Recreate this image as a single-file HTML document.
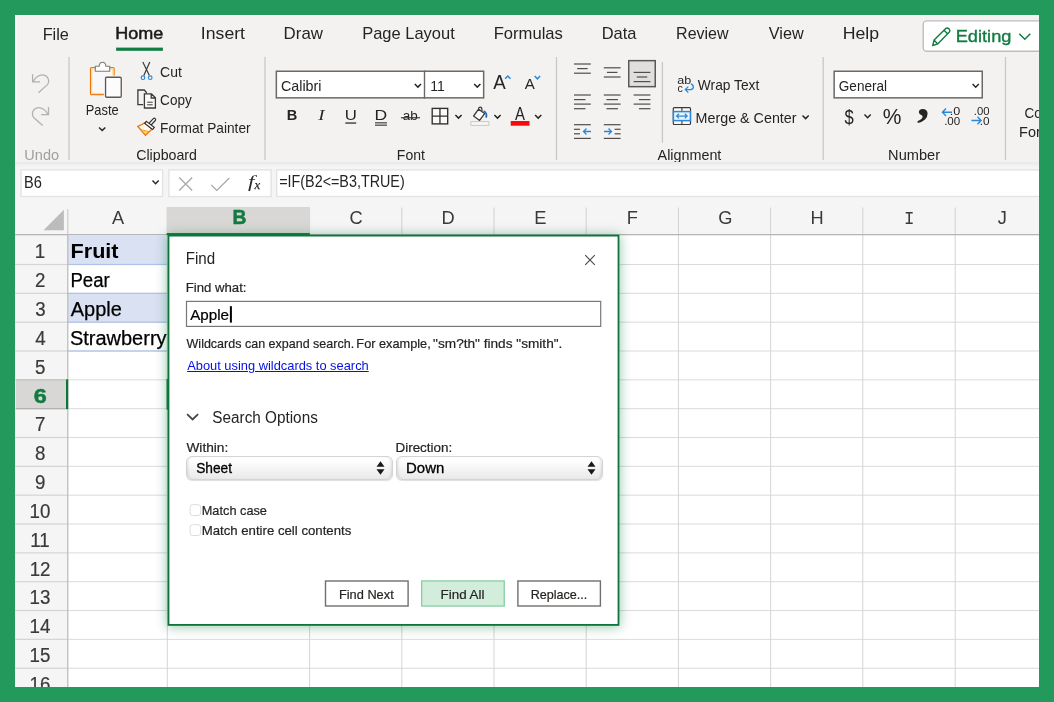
<!DOCTYPE html>
<html lang="en">
<head>
<meta charset="utf-8">
<title>Excel - Find</title>
<style>
html,body{margin:0;padding:0;}
body{width:1054px;height:702px;overflow:hidden;background:#239a5c;font-family:"Liberation Sans",sans-serif;color:#252423;}
.app{position:absolute;left:15px;top:15px;width:1024px;height:672px;overflow:hidden;background:#f3f2f1;}
.cv{will-change:transform;position:absolute;left:-15px;top:-15px;width:1054px;height:702px;}
.t{position:absolute;white-space:pre;line-height:1;transform-origin:0 0;}
.b{position:absolute;box-sizing:border-box;}
svg.b{overflow:visible;}

</style>
</head>
<body>
<div class="app"><div class="cv">
<svg class="b" style="left:15px;top:15px" width="2" height="147"><rect x="0.00" y="0.00" width="1.60" height="147.00" fill="#fbfafa"/></svg>
<svg class="b" style="left:15px;top:162px" width="2" height="525"><rect x="0.00" y="0.00" width="1.20" height="525.00" fill="#fafafa"/></svg>
<svg class="b" style="left:15px;top:15px" width="1024" height="1"><rect x="0.00" y="0.00" width="1024.00" height="0.80" fill="#f9f8f8"/></svg>
<span class="t" style="left:42px;top:26px;font-size:17.3px;transform:translateX(0.66px) scaleX(0.9420);">File</span>
<span class="t" style="left:115px;top:25px;font-size:17px;transform:translateX(0.31px) scaleX(1.0596);color:#1b1a19;-webkit-text-stroke:0.5px #1b1a19;">Home</span>
<svg class="b" style="left:116px;top:47px" width="47" height="4"><rect x="0.10" y="0.60" width="46.80" height="3.20" fill="#107c41"/></svg>
<span class="t" style="left:200px;top:25px;font-size:17px;transform:translateX(0.87px) scaleX(1.0368);">Insert</span>
<span class="t" style="left:283px;top:25px;font-size:17px;transform:translateX(0.61px) scaleX(0.9913);">Draw</span>
<span class="t" style="left:362px;top:25px;font-size:17px;transform:translateX(0.14px) scaleX(0.9699);">Page Layout</span>
<span class="t" style="left:493px;top:25px;font-size:17px;transform:translateX(0.63px) scaleX(0.9775);">Formulas</span>
<span class="t" style="left:601px;top:25px;font-size:17px;transform:translateX(0.74px) scaleX(0.9678);">Data</span>
<span class="t" style="left:676px;top:25px;font-size:17px;transform:translateX(0.08px) scaleX(0.9412);">Review</span>
<span class="t" style="left:768px;top:25px;font-size:17px;transform:translateX(0.72px) scaleX(0.9560);">View</span>
<span class="t" style="left:842px;top:25px;font-size:17px;transform:translateX(0.74px) scaleX(1.0410);">Help</span>
<svg class="b" style="left:921px;top:19px;" width="140" height="34"><rect x="2.20" y="1.90" width="136.10" height="30.30" rx="3.5" fill="#fff" stroke="#c0bebc" stroke-width="1.4"/></svg>
<svg class="b" style="left:931px;top:26px;" width="22" height="22"><g transform="translate(0.50 0.50)"><path d="M1.2 19 L2.6 13.6 L14 2.2 a2.3 2.3 0 0 1 3.3 0 l0.3 0.3 a2.3 2.3 0 0 1 0 3.3 L6.2 17.4 Z M2.8 13.8 L6 17.2 M12.6 3.8 l3.4 3.4" fill="none" stroke="#107c41" stroke-width="1.4" stroke-linejoin="round"/></g></svg>
<span class="t" style="left:955px;top:29px;font-size:16.8px;transform:translateX(0.70px) scaleX(1.0852);color:#107c41;-webkit-text-stroke:0.35px #107c41;">Editing</span>
<svg class="b" style="left:1018px;top:31px;" width="16" height="12"><g transform="translate(0.00 0.50)"><path d="M1.3 2.2 L6.8 7.8 L12.3 2.2" fill="none" stroke="#107c41" stroke-width="1.5"/></g></svg>
<svg class="b" style="left:68px;top:57px" width="2" height="103"><rect x="0.35" y="0.00" width="1.30" height="103.00" fill="#cac8c6"/></svg>
<svg class="b" style="left:264px;top:57px" width="2" height="103"><rect x="0.35" y="0.00" width="1.30" height="103.00" fill="#cac8c6"/></svg>
<svg class="b" style="left:555px;top:57px" width="3" height="103"><rect x="0.85" y="0.00" width="1.30" height="103.00" fill="#cac8c6"/></svg>
<svg class="b" style="left:661px;top:62px" width="3" height="81"><rect x="0.75" y="0.00" width="1.30" height="80.80" fill="#cac8c6"/></svg>
<svg class="b" style="left:822px;top:57px" width="2" height="103"><rect x="0.55" y="0.00" width="1.30" height="103.00" fill="#cac8c6"/></svg>
<svg class="b" style="left:1004px;top:57px" width="3" height="103"><rect x="0.85" y="0.00" width="1.30" height="103.00" fill="#cac8c6"/></svg>
<svg class="b" style="left:31px;top:73px;" width="22" height="23"><g transform="translate(0.00 0.00)"><path d="M1.6 1.3 V8.9 H9 M2 8.6 C4.5 4.6 8 1.9 11.5 1.9 C15 1.9 17.7 4.6 17.7 8 C17.7 9.6 17.2 10.9 16.2 11.9 L7.4 19.7" fill="none" stroke="#b3b0ad" stroke-width="1.3"/></g></svg>
<svg class="b" style="left:31px;top:105px;" width="22" height="23"><g transform="translate(0.00 0.80)"><g transform="translate(19.1 0) scale(-1 1)"><path d="M1.6 1.3 V8.9 H9 M2 8.6 C4.5 4.6 8 1.9 11.5 1.9 C15 1.9 17.7 4.6 17.7 8 C17.7 9.6 17.2 10.9 16.2 11.9 L7.4 19.7" fill="none" stroke="#b3b0ad" stroke-width="1.3"/></g></g></svg>
<span class="t" style="left:24px;top:148px;font-size:14.2px;transform:translateX(0.37px) scaleX(1.0226);color:#a19f9d;">Undo</span>
<svg class="b" style="left:89px;top:61px;" width="36" height="40"><g transform="translate(0.00 0.00)"><rect x="1.5" y="6.7" width="23.6" height="27" rx="1" fill="#f8f8f8" stroke="#e8760f" stroke-width="1.2"/>
<rect x="2.7" y="7.9" width="21.2" height="24.6" fill="none" stroke="#ffd98e" stroke-width="1.2"/>
<path d="M6.3 10.3 V5.3 H10.2 C10.2 -0.2 16.8 -0.2 16.8 5.3 H20.7 V10.3 Z" fill="#fdfdfd" stroke="#7d7b79" stroke-width="1.1" stroke-linejoin="round"/>
<rect x="14.9" y="14.6" width="19" height="23.3" fill="#f8f7f6"/>
<rect x="16.55" y="16.25" width="15.7" height="20" rx="1" fill="#fcfcfc" stroke="#5a5856" stroke-width="1.3"/></g></svg>
<span class="t" style="left:85px;top:103px;font-size:14.3px;transform:translateX(0.74px) scaleX(0.9007);">Paste</span>
<svg class="b" style="left:98px;top:126px;" width="10" height="8"><g transform="translate(0.10 0.30)"><path d="M1 1.1 L4.1 4.2 L7.2 1.1" fill="none" stroke="#252423" stroke-width="1.45"/></g></svg>
<svg class="b" style="left:139px;top:61px;" width="16" height="21"><g transform="translate(0.50 0.10)"><path d="M3.3 1 L9.9 14.4 M10.3 1 L4.3 14.4" fill="none" stroke="#3b3a39" stroke-width="1.2"/>
<circle cx="3.5" cy="16.6" r="1.8" fill="none" stroke="#2b88d8" stroke-width="1.2"/><circle cx="10.7" cy="16.6" r="1.8" fill="none" stroke="#2b88d8" stroke-width="1.2"/></g></svg>
<span class="t" style="left:160px;top:65px;font-size:14.3px;transform:translateX(0.10px) scaleX(0.9760);">Cut</span>
<svg class="b" style="left:136px;top:89px;" width="22" height="22"><g transform="translate(0.70 0.20)"><path d="M6.5 15.5 H1.2 V0.8 H7.5 L9.6 3 V4.5" fill="none" stroke="#3b3a39" stroke-width="1.3"/>
<path d="M8 4.6 H14.8 L18.7 8.5 V18.8 H7.7 V4.6 Z M14.5 4.8 V8.8 H18.4" fill="#faf9f8" stroke="#3b3a39" stroke-width="1.3"/>
<path d="M10.5 13 H16 M10.5 15.6 H16" stroke="#3b3a39" stroke-width="1"/></g></svg>
<span class="t" style="left:160px;top:93px;font-size:14.3px;transform:translateX(0.12px) scaleX(0.9467);">Copy</span>
<svg class="b" style="left:132px;top:112px;" width="32" height="30"><g transform="translate(0.00 0.00)"><path d="M5.7 14.3 C8.5 13.6 11 12.4 13 10.6 L19.8 17.2 L13.5 23.3 Z" fill="#fffdf8" stroke="#e8720c" stroke-width="1.3" stroke-linejoin="round"/>
<path d="M8.6 17.6 L17 19.6 L13.5 22.6 Z" fill="#ffd45e" stroke="#f08a1c" stroke-width="0.8" stroke-linejoin="round"/>
<path d="M22.3 7.6 L18.8 11.4" fill="none" stroke="#2f2e2d" stroke-width="3.8" stroke-linecap="round"/>
<path d="M22.3 7.6 L18.4 11.8" fill="none" stroke="#fbfaf9" stroke-width="1.5" stroke-linecap="round"/>
<path d="M14.6 11.2 L20.4 15.6" fill="none" stroke="#2f2e2d" stroke-width="3.8" stroke-linecap="square"/>
<path d="M14.6 11.2 L20.4 15.6" fill="none" stroke="#fbfaf9" stroke-width="1.5" stroke-linecap="square"/></g></svg>
<span class="t" style="left:160px;top:121px;font-size:14.3px;transform:translateX(0.07px) scaleX(0.9574);">Format Painter</span>
<span class="t" style="left:136px;top:148px;font-size:14.2px;transform:translateX(0.19px);">Clipboard</span>
<svg class="b" style="left:274px;top:69px;" width="212" height="31"><rect x="2.35" y="2.25" width="207.30" height="26.60" rx="0" fill="#fff" stroke="#6b6967" stroke-width="1.5"/></svg>
<svg class="b" style="left:423px;top:70px" width="3" height="29"><rect x="0.80" y="0.50" width="1.40" height="28.10" fill="#6b6967"/></svg>
<span class="t" style="left:280px;top:79px;font-size:14.3px;transform:translateX(0.99px);">Calibri</span>
<svg class="b" style="left:413px;top:82px;" width="10" height="8"><g transform="translate(0.80 0.90)"><path d="M1 1.1 L4.1 4.2 L7.2 1.1" fill="none" stroke="#252423" stroke-width="1.45"/></g></svg>
<span class="t" style="left:430px;top:79px;font-size:14.3px;transform:translateX(0.25px) scaleX(0.9783);">11</span>
<svg class="b" style="left:473px;top:82px;" width="10" height="8"><g transform="translate(0.20 0.90)"><path d="M1 1.1 L4.1 4.2 L7.2 1.1" fill="none" stroke="#252423" stroke-width="1.45"/></g></svg>
<span class="t" style="left:493px;top:72px;font-size:20.5px;transform:translateX(0.15px) scaleX(0.9130);">A</span>
<svg class="b" style="left:504px;top:74px;" width="9" height="7"><g transform="translate(0.30 0.80)"><path d="M0.8 4 L3.5 1.2 L6.2 4" fill="none" stroke="#2b88d8" stroke-width="1.5"/></g></svg>
<span class="t" style="left:524px;top:76px;font-size:15px;transform:translateX(0.86px) scaleX(1.0063);">A</span>
<svg class="b" style="left:533px;top:75px;" width="9" height="7"><g transform="translate(0.90 0.00)"><path d="M0.8 1 L3.5 3.8 L6.2 1" fill="none" stroke="#2b88d8" stroke-width="1.5"/></g></svg>
<span class="t" style="left:286px;top:107px;font-size:15px;transform:translateX(0.82px) scaleX(0.9727);font-weight:700;">B</span>
<span class="t" style="left:318px;top:107px;font-size:15.5px;transform:translateX(0.19px) scaleX(1.2134);font-family:'Liberation Serif',serif;font-style:italic;">I</span>
<span class="t" style="left:344px;top:108px;font-size:14.8px;transform:translateX(0.80px) scaleX(1.1311);">U</span>
<svg class="b" style="left:345px;top:122px" width="12" height="2"><rect x="0.30" y="0.40" width="10.90" height="1.30" fill="#323130"/></svg>
<span class="t" style="left:374px;top:108px;font-size:14.8px;transform:translateX(0.55px) scaleX(1.1860);">D</span>
<svg class="b" style="left:375px;top:122px" width="12" height="2"><rect x="0.00" y="0.30" width="12.00" height="1.10" fill="#323130"/></svg>
<svg class="b" style="left:375px;top:124px" width="12" height="2"><rect x="0.00" y="0.60" width="12.00" height="1.10" fill="#323130"/></svg>
<span class="t" style="left:402px;top:109px;font-size:13.5px;transform:translateX(0.83px) scaleX(0.9949);">ab</span>
<svg class="b" style="left:400px;top:117px" width="20" height="2"><rect x="0.90" y="0.20" width="19.10" height="1.10" fill="#323130"/></svg>
<svg class="b" style="left:430px;top:107px;" width="20" height="20"><g transform="translate(0.80 0.00)"><rect x="1.4" y="1.4" width="15.5" height="15.5" fill="#faf9f8" stroke="#2f2e2d" stroke-width="1.35"/><path d="M9.15 1.4 V16.9 M1.4 9.15 H16.9" stroke="#2f2e2d" stroke-width="1.3"/></g></svg>
<svg class="b" style="left:454px;top:113px;" width="10" height="8"><g transform="translate(0.40 0.90)"><path d="M1 1.1 L4.1 4.2 L7.2 1.1" fill="none" stroke="#252423" stroke-width="1.45"/></g></svg>
<svg class="b" style="left:470px;top:106px;" width="22" height="22"><g transform="translate(0.40 0.00)"><path d="M3.2 10 L8.2 3.2 L14.2 7.6 L9.2 14.4 Z" fill="#faf9f8" stroke="#3b3a39" stroke-width="1.3" stroke-linejoin="round"/>
<path d="M8.2 3.2 C8 0.5 11.5 0.5 11.5 3.5 V5.5" fill="none" stroke="#3b3a39" stroke-width="1.2"/>
<path d="M13.2 5.2 C16 6 16.6 9 15.6 11.6" fill="none" stroke="#1e6fc0" stroke-width="1.8"/>
<rect x="0.5" y="15.6" width="18" height="3.8" fill="#f6f5f4" stroke="#c8c6c4" stroke-width="0.9"/></g></svg>
<svg class="b" style="left:493px;top:113px;" width="10" height="8"><g transform="translate(0.40 0.90)"><path d="M1 1.1 L4.1 4.2 L7.2 1.1" fill="none" stroke="#252423" stroke-width="1.45"/></g></svg>
<span class="t" style="left:514px;top:106px;font-size:17.5px;transform:translateX(0.96px) scaleX(0.8539);">A</span>
<svg class="b" style="left:510px;top:121px" width="20" height="5"><rect x="0.70" y="0.00" width="18.80" height="4.70" fill="#f80a0a"/></svg>
<svg class="b" style="left:534px;top:113px;" width="10" height="8"><g transform="translate(0.10 0.90)"><path d="M1 1.1 L4.1 4.2 L7.2 1.1" fill="none" stroke="#252423" stroke-width="1.45"/></g></svg>
<span class="t" style="left:396px;top:148px;font-size:14.2px;transform:translateX(0.84px) scaleX(0.9881);">Font</span>
<svg class="b" style="left:574px;top:63px" width="17" height="2"><rect x="0.00" y="0.40" width="16.80" height="1.20" fill="#504e4c"/></svg>
<svg class="b" style="left:577px;top:68px" width="11" height="2"><rect x="0.15" y="0.00" width="10.50" height="1.20" fill="#504e4c"/></svg>
<svg class="b" style="left:574px;top:72px" width="17" height="2"><rect x="0.00" y="0.60" width="16.80" height="1.20" fill="#504e4c"/></svg>
<svg class="b" style="left:603px;top:67px" width="18" height="2"><rect x="0.80" y="0.20" width="16.80" height="1.20" fill="#504e4c"/></svg>
<svg class="b" style="left:606px;top:71px" width="12" height="2"><rect x="0.95" y="0.80" width="10.50" height="1.20" fill="#504e4c"/></svg>
<svg class="b" style="left:603px;top:76px" width="18" height="2"><rect x="0.80" y="0.40" width="16.80" height="1.20" fill="#504e4c"/></svg>
<svg class="b" style="left:627px;top:58px;" width="30" height="31"><rect x="1.75" y="2.65" width="26.50" height="26.00" rx="0" fill="#e1dfdd" stroke="#5a5856" stroke-width="1.5"/></svg>
<svg class="b" style="left:633px;top:71px" width="18" height="2"><rect x="0.60" y="0.80" width="16.80" height="1.20" fill="#504e4c"/></svg>
<svg class="b" style="left:636px;top:76px" width="12" height="2"><rect x="0.75" y="0.40" width="10.50" height="1.20" fill="#504e4c"/></svg>
<svg class="b" style="left:633px;top:81px" width="18" height="2"><rect x="0.60" y="0.00" width="16.80" height="1.20" fill="#504e4c"/></svg>
<svg class="b" style="left:574px;top:94px" width="17" height="2"><rect x="0.00" y="0.40" width="16.80" height="1.20" fill="#504e4c"/></svg>
<svg class="b" style="left:574px;top:99px" width="12" height="2"><rect x="0.00" y="0.00" width="11.50" height="1.20" fill="#504e4c"/></svg>
<svg class="b" style="left:574px;top:103px" width="17" height="2"><rect x="0.00" y="0.50" width="16.80" height="1.20" fill="#504e4c"/></svg>
<svg class="b" style="left:574px;top:108px" width="12" height="2"><rect x="0.00" y="0.10" width="11.50" height="1.20" fill="#504e4c"/></svg>
<svg class="b" style="left:603px;top:94px" width="18" height="2"><rect x="0.80" y="0.40" width="16.80" height="1.20" fill="#504e4c"/></svg>
<svg class="b" style="left:606px;top:99px" width="12" height="2"><rect x="0.45" y="0.00" width="11.50" height="1.20" fill="#504e4c"/></svg>
<svg class="b" style="left:603px;top:103px" width="18" height="2"><rect x="0.80" y="0.50" width="16.80" height="1.20" fill="#504e4c"/></svg>
<svg class="b" style="left:606px;top:108px" width="12" height="2"><rect x="0.45" y="0.10" width="11.50" height="1.20" fill="#504e4c"/></svg>
<svg class="b" style="left:633px;top:94px" width="18" height="2"><rect x="0.60" y="0.40" width="16.80" height="1.20" fill="#504e4c"/></svg>
<svg class="b" style="left:638px;top:99px" width="13" height="2"><rect x="0.90" y="0.00" width="11.50" height="1.20" fill="#504e4c"/></svg>
<svg class="b" style="left:633px;top:103px" width="18" height="2"><rect x="0.60" y="0.50" width="16.80" height="1.20" fill="#504e4c"/></svg>
<svg class="b" style="left:638px;top:108px" width="13" height="2"><rect x="0.90" y="0.10" width="11.50" height="1.20" fill="#504e4c"/></svg>
<svg class="b" style="left:574px;top:124px" width="17" height="2"><rect x="0.00" y="0.10" width="16.80" height="1.20" fill="#504e4c"/></svg>
<svg class="b" style="left:574px;top:137px" width="17" height="2"><rect x="0.00" y="0.80" width="16.80" height="1.20" fill="#504e4c"/></svg>
<svg class="b" style="left:574px;top:128px" width="6" height="2"><rect x="0.00" y="0.70" width="6.00" height="1.20" fill="#504e4c"/></svg>
<svg class="b" style="left:574px;top:133px" width="6" height="2"><rect x="0.00" y="0.20" width="6.00" height="1.20" fill="#504e4c"/></svg>
<svg class="b" style="left:582px;top:127px;" width="11" height="10"><g transform="translate(0.50 0.50)"><path d="M8.5 4 H1.2 M4 1 L1 4 L4 7" fill="none" stroke="#2b88d8" stroke-width="1.3"/></g></svg>
<svg class="b" style="left:603px;top:124px" width="18" height="2"><rect x="0.80" y="0.10" width="16.80" height="1.20" fill="#504e4c"/></svg>
<svg class="b" style="left:603px;top:137px" width="18" height="2"><rect x="0.80" y="0.80" width="16.80" height="1.20" fill="#504e4c"/></svg>
<svg class="b" style="left:614px;top:128px" width="7" height="2"><rect x="0.60" y="0.70" width="6.00" height="1.20" fill="#504e4c"/></svg>
<svg class="b" style="left:614px;top:133px" width="7" height="2"><rect x="0.60" y="0.20" width="6.00" height="1.20" fill="#504e4c"/></svg>
<svg class="b" style="left:603px;top:127px;" width="11" height="10"><g transform="translate(0.50 0.50)"><path d="M0.5 4 H7.8 M5 1 L8 4 L5 7" fill="none" stroke="#2b88d8" stroke-width="1.3"/></g></svg>
<span class="t" style="left:677px;top:75px;font-size:11.5px;transform:translateX(0.17px) scaleX(1.0917);">ab</span>
<span class="t" style="left:677px;top:83px;font-size:11.5px;transform:translateX(0.55px) scaleX(0.9302);">c</span>
<svg class="b" style="left:683px;top:83px;" width="14" height="12"><g transform="translate(0.50 0.00)"><path d="M7.5 0.8 C11 2.5 10.5 6.6 6.5 6.6 H2 M4.8 3.6 L1.8 6.6 L4.8 9.6" fill="none" stroke="#2b88d8" stroke-width="1.3"/></g></svg>
<span class="t" style="left:697px;top:78px;font-size:14.3px;transform:translateX(0.83px) scaleX(0.9628);">Wrap Text</span>
<svg class="b" style="left:672px;top:107px;" width="21" height="20"><g transform="translate(0.60 0.00)"><rect x="0.7" y="0.7" width="17.2" height="16.8" rx="1" fill="#faf9f8" stroke="#3b3a39" stroke-width="1.2"/>
<path d="M9.3 0.7 V17.5" stroke="#3b3a39" stroke-width="1.1"/>
<rect x="0.8" y="4.6" width="17" height="9" fill="#eaf3fc" stroke="#2b88d8" stroke-width="1.5"/>
<path d="M4 9.1 H14.6 M6.4 6.8 L4 9.1 L6.4 11.4 M12.2 6.8 L14.6 9.1 L12.2 11.4" fill="none" stroke="#2b88d8" stroke-width="1.2"/></g></svg>
<span class="t" style="left:695px;top:111px;font-size:14.3px;transform:translateX(0.62px);">Merge &amp; Center</span>
<svg class="b" style="left:801px;top:114px;" width="10" height="8"><g transform="translate(0.50 0.40)"><path d="M1 1.1 L4.1 4.2 L7.2 1.1" fill="none" stroke="#252423" stroke-width="1.45"/></g></svg>
<span class="t" style="left:657px;top:148px;font-size:14.2px;transform:translateX(0.56px) scaleX(1.0109);">Alignment</span>
<svg class="b" style="left:832px;top:69px;" width="152" height="31"><rect x="2.15" y="2.25" width="148.10" height="26.60" rx="0" fill="#fff" stroke="#6b6967" stroke-width="1.5"/></svg>
<span class="t" style="left:838px;top:79px;font-size:14px;transform:translateX(0.82px) scaleX(0.9676);">General</span>
<svg class="b" style="left:971px;top:83px;" width="10" height="8"><g transform="translate(0.60 0.00)"><path d="M1 1.1 L4.1 4.2 L7.2 1.1" fill="none" stroke="#252423" stroke-width="1.45"/></g></svg>
<span class="t" style="left:844px;top:107px;font-size:20.5px;transform:translateX(0.43px) scaleX(0.8099);">$</span>
<svg class="b" style="left:863px;top:113px;" width="10" height="8"><g transform="translate(0.50 0.50)"><path d="M1 1.1 L4.1 4.2 L7.2 1.1" fill="none" stroke="#252423" stroke-width="1.45"/></g></svg>
<span class="t" style="left:882px;top:106px;font-size:22.5px;transform:translateX(0.67px) scaleX(0.9322);">%</span>
<span class="t" style="left:917px;top:78px;font-size:46px;transform:translateX(0.08px) scaleX(1.0870);font-weight:700;font-family:'Liberation Serif',serif;">,</span>
<span class="t" style="left:949px;top:106px;font-size:11.8px;transform:translateX(0.76px) scaleX(1.0698);">.0</span>
<span class="t" style="left:944px;top:116px;font-size:11.8px;transform:translateX(0.16px) scaleX(0.9800);">.00</span>
<svg class="b" style="left:941px;top:107px;" width="14" height="12"><g transform="translate(0.00 0.50)"><path d="M11 4.7 H1.6 M5 1 L1.4 4.7 L5 8.4" fill="none" stroke="#2b88d8" stroke-width="1.4"/></g></svg>
<span class="t" style="left:973px;top:106px;font-size:11.8px;transform:translateX(0.78px) scaleX(0.9599);">.00</span>
<span class="t" style="left:979px;top:116px;font-size:11.8px;transform:translateX(0.74px);">.0</span>
<svg class="b" style="left:970px;top:116px;" width="14" height="12"><g transform="translate(0.50 0.00)"><path d="M0.9 4.5 H10.4 M7 0.8 L10.6 4.5 L7 8.2" fill="none" stroke="#2b88d8" stroke-width="1.4"/></g></svg>
<span class="t" style="left:888px;top:148px;font-size:14.2px;transform:translateX(0.10px) scaleX(1.0286);">Number</span>
<span class="t" style="left:1024px;top:106px;font-size:14.3px;transform:translateX(0.53px) scaleX(0.9422);">Co</span>
<span class="t" style="left:1019px;top:125px;font-size:14.3px;transform:translateX(0.11px) scaleX(1.0122);">For</span>
<div class="b" style="left:15.00px;top:161.50px;width:1024.00px;height:45.50px;background:linear-gradient(#e9e8e7,#f5f5f5 5px);"></div>
<svg class="b" style="left:19px;top:168px;" width="146" height="31"><rect x="2.00" y="1.90" width="141.60" height="26.60" rx="0" fill="#fff" stroke="#e4e3e2" stroke-width="1.4"/></svg>
<span class="t" style="left:23px;top:175px;font-size:16px;transform:translateX(1.00px) scaleX(0.9112);">B6</span>
<svg class="b" style="left:151px;top:179px;" width="10" height="8"><g transform="translate(0.50 0.50)"><path d="M1 1.1 L4.1 4.2 L7.2 1.1" fill="none" stroke="#252423" stroke-width="1.45"/></g></svg>
<svg class="b" style="left:167px;top:168px;" width="106" height="31"><rect x="1.90" y="1.90" width="102.20" height="26.70" rx="0" fill="#fff" stroke="#e4e3e2" stroke-width="1.4"/></svg>
<svg class="b" style="left:178px;top:176px;" width="17" height="17"><g transform="translate(0.20 0.50)"><path d="M1 1 L14 14 M14 1 L1 14" fill="none" stroke="#a8a6a4" stroke-width="1.2"/></g></svg>
<svg class="b" style="left:210px;top:176px;" width="22" height="17"><g transform="translate(0.30 0.50)"><path d="M1 8.5 L6.5 14 L19 1.5" fill="none" stroke="#a8a6a4" stroke-width="1.2"/></g></svg>
<span class="t" style="left:248px;top:173px;font-size:17.5px;transform:scaleX(1.3147);color:#2b2a29;font-family:'Liberation Serif',serif;font-style:italic;">f<span class="t" style="left:4.8px;top:5px;font-size:13.5px;transform:scaleX(0.7262);-webkit-text-stroke:0.25px #2b2a29;">x</span></span>
<svg class="b" style="left:275px;top:168px;" width="771" height="31"><rect x="1.70" y="1.90" width="767.60" height="26.60" rx="0" fill="#fff" stroke="#e4e3e2" stroke-width="1.4"/></svg>
<span class="t" style="left:279px;top:173px;font-size:16.5px;transform:translateX(0.22px) scaleX(0.8686);">=IF(B2&lt;=B3,TRUE)</span>
<div class="b" style="left:15.00px;top:207.00px;width:1024.00px;height:27.50px;background:#f5f5f5;"></div>
<svg class="b" style="left:67px;top:234px" width="972" height="453"><rect x="0.80" y="0.50" width="971.20" height="452.50" fill="#fff"/></svg>
<div class="b" style="left:15.00px;top:234.50px;width:52.80px;height:452.50px;background:#f5f5f5;"></div>
<svg class="b" style="left:67px;top:235px" width="101" height="30"><rect x="0.80" y="0.66" width="100.00" height="28.84" fill="#d9e1f2"/></svg>
<svg class="b" style="left:67px;top:293px" width="101" height="30"><rect x="0.80" y="0.33" width="100.00" height="28.84" fill="#d9e1f2"/></svg>
<svg class="b" style="left:15px;top:263px" width="53" height="3"><rect x="0.00" y="0.90" width="52.80" height="1.20" fill="#d4d4d4"/></svg>
<svg class="b" style="left:67px;top:263px" width="972" height="2"><rect x="0.80" y="1.00" width="971.20" height="1.00" fill="#dbdbdb"/></svg>
<svg class="b" style="left:15px;top:292px" width="53" height="2"><rect x="0.00" y="0.73" width="52.80" height="1.20" fill="#d4d4d4"/></svg>
<svg class="b" style="left:67px;top:292px" width="972" height="2"><rect x="0.80" y="0.83" width="971.20" height="1.00" fill="#dbdbdb"/></svg>
<svg class="b" style="left:15px;top:321px" width="53" height="2"><rect x="0.00" y="0.57" width="52.80" height="1.20" fill="#d4d4d4"/></svg>
<svg class="b" style="left:67px;top:321px" width="972" height="2"><rect x="0.80" y="0.67" width="971.20" height="1.00" fill="#dbdbdb"/></svg>
<svg class="b" style="left:15px;top:350px" width="53" height="2"><rect x="0.00" y="0.40" width="52.80" height="1.20" fill="#d4d4d4"/></svg>
<svg class="b" style="left:67px;top:350px" width="972" height="2"><rect x="0.80" y="0.50" width="971.20" height="1.00" fill="#dbdbdb"/></svg>
<svg class="b" style="left:15px;top:379px" width="53" height="2"><rect x="0.00" y="0.24" width="52.80" height="1.20" fill="#d4d4d4"/></svg>
<svg class="b" style="left:67px;top:379px" width="972" height="2"><rect x="0.80" y="0.34" width="971.20" height="1.00" fill="#dbdbdb"/></svg>
<svg class="b" style="left:15px;top:408px" width="53" height="2"><rect x="0.00" y="0.08" width="52.80" height="1.20" fill="#d4d4d4"/></svg>
<svg class="b" style="left:67px;top:408px" width="972" height="2"><rect x="0.80" y="0.18" width="971.20" height="1.00" fill="#dbdbdb"/></svg>
<svg class="b" style="left:15px;top:436px" width="53" height="3"><rect x="0.00" y="0.91" width="52.80" height="1.20" fill="#d4d4d4"/></svg>
<svg class="b" style="left:67px;top:437px" width="972" height="2"><rect x="0.80" y="0.01" width="971.20" height="1.00" fill="#dbdbdb"/></svg>
<svg class="b" style="left:15px;top:465px" width="53" height="2"><rect x="0.00" y="0.75" width="52.80" height="1.20" fill="#d4d4d4"/></svg>
<svg class="b" style="left:67px;top:465px" width="972" height="2"><rect x="0.80" y="0.85" width="971.20" height="1.00" fill="#dbdbdb"/></svg>
<svg class="b" style="left:15px;top:494px" width="53" height="2"><rect x="0.00" y="0.58" width="52.80" height="1.20" fill="#d4d4d4"/></svg>
<svg class="b" style="left:67px;top:494px" width="972" height="2"><rect x="0.80" y="0.68" width="971.20" height="1.00" fill="#dbdbdb"/></svg>
<svg class="b" style="left:15px;top:523px" width="53" height="2"><rect x="0.00" y="0.42" width="52.80" height="1.20" fill="#d4d4d4"/></svg>
<svg class="b" style="left:67px;top:523px" width="972" height="2"><rect x="0.80" y="0.52" width="971.20" height="1.00" fill="#dbdbdb"/></svg>
<svg class="b" style="left:15px;top:552px" width="53" height="2"><rect x="0.00" y="0.26" width="52.80" height="1.20" fill="#d4d4d4"/></svg>
<svg class="b" style="left:67px;top:552px" width="972" height="2"><rect x="0.80" y="0.36" width="971.20" height="1.00" fill="#dbdbdb"/></svg>
<svg class="b" style="left:15px;top:581px" width="53" height="2"><rect x="0.00" y="0.09" width="52.80" height="1.20" fill="#d4d4d4"/></svg>
<svg class="b" style="left:67px;top:581px" width="972" height="2"><rect x="0.80" y="0.19" width="971.20" height="1.00" fill="#dbdbdb"/></svg>
<svg class="b" style="left:15px;top:609px" width="53" height="3"><rect x="0.00" y="0.93" width="52.80" height="1.20" fill="#d4d4d4"/></svg>
<svg class="b" style="left:67px;top:610px" width="972" height="2"><rect x="0.80" y="0.03" width="971.20" height="1.00" fill="#dbdbdb"/></svg>
<svg class="b" style="left:15px;top:638px" width="53" height="2"><rect x="0.00" y="0.76" width="52.80" height="1.20" fill="#d4d4d4"/></svg>
<svg class="b" style="left:67px;top:638px" width="972" height="2"><rect x="0.80" y="0.86" width="971.20" height="1.00" fill="#dbdbdb"/></svg>
<svg class="b" style="left:15px;top:667px" width="53" height="2"><rect x="0.00" y="0.60" width="52.80" height="1.20" fill="#d4d4d4"/></svg>
<svg class="b" style="left:67px;top:667px" width="972" height="2"><rect x="0.80" y="0.70" width="971.20" height="1.00" fill="#dbdbdb"/></svg>
<svg class="b" style="left:15px;top:696px" width="53" height="2"><rect x="0.00" y="0.44" width="52.80" height="1.20" fill="#d4d4d4"/></svg>
<svg class="b" style="left:67px;top:696px" width="972" height="2"><rect x="0.80" y="0.54" width="971.20" height="1.00" fill="#dbdbdb"/></svg>
<svg class="b" style="left:67px;top:263px" width="101" height="3"><rect x="0.80" y="0.90" width="99.50" height="1.20" fill="#adc2e8"/></svg>
<svg class="b" style="left:67px;top:292px" width="101" height="2"><rect x="0.80" y="0.73" width="99.50" height="1.20" fill="#adc2e8"/></svg>
<svg class="b" style="left:67px;top:321px" width="101" height="2"><rect x="0.80" y="0.57" width="99.50" height="1.20" fill="#adc2e8"/></svg>
<svg class="b" style="left:67px;top:350px" width="101" height="2"><rect x="0.80" y="0.40" width="99.50" height="1.20" fill="#adc2e8"/></svg>
<svg class="b" style="left:166px;top:234px" width="2" height="453"><rect x="0.80" y="0.50" width="1.00" height="452.50" fill="#d5d5d5"/></svg>
<svg class="b" style="left:166px;top:207px" width="2" height="28"><rect x="0.80" y="0.50" width="1.00" height="27.00" fill="#d2d2d2"/></svg>
<svg class="b" style="left:309px;top:234px" width="2" height="453"><rect x="0.10" y="0.50" width="1.00" height="452.50" fill="#d5d5d5"/></svg>
<svg class="b" style="left:309px;top:207px" width="2" height="28"><rect x="0.10" y="0.50" width="1.00" height="27.00" fill="#d2d2d2"/></svg>
<svg class="b" style="left:401px;top:234px" width="2" height="453"><rect x="0.30" y="0.50" width="1.00" height="452.50" fill="#d5d5d5"/></svg>
<svg class="b" style="left:401px;top:207px" width="2" height="28"><rect x="0.30" y="0.50" width="1.00" height="27.00" fill="#d2d2d2"/></svg>
<svg class="b" style="left:493px;top:234px" width="2" height="453"><rect x="0.50" y="0.50" width="1.00" height="452.50" fill="#d5d5d5"/></svg>
<svg class="b" style="left:493px;top:207px" width="2" height="28"><rect x="0.50" y="0.50" width="1.00" height="27.00" fill="#d2d2d2"/></svg>
<svg class="b" style="left:585px;top:234px" width="2" height="453"><rect x="0.70" y="0.50" width="1.00" height="452.50" fill="#d5d5d5"/></svg>
<svg class="b" style="left:585px;top:207px" width="2" height="28"><rect x="0.70" y="0.50" width="1.00" height="27.00" fill="#d2d2d2"/></svg>
<svg class="b" style="left:677px;top:234px" width="2" height="453"><rect x="0.90" y="0.50" width="1.00" height="452.50" fill="#d5d5d5"/></svg>
<svg class="b" style="left:677px;top:207px" width="2" height="28"><rect x="0.90" y="0.50" width="1.00" height="27.00" fill="#d2d2d2"/></svg>
<svg class="b" style="left:770px;top:234px" width="2" height="453"><rect x="0.10" y="0.50" width="1.00" height="452.50" fill="#d5d5d5"/></svg>
<svg class="b" style="left:770px;top:207px" width="2" height="28"><rect x="0.10" y="0.50" width="1.00" height="27.00" fill="#d2d2d2"/></svg>
<svg class="b" style="left:862px;top:234px" width="2" height="453"><rect x="0.30" y="0.50" width="1.00" height="452.50" fill="#d5d5d5"/></svg>
<svg class="b" style="left:862px;top:207px" width="2" height="28"><rect x="0.30" y="0.50" width="1.00" height="27.00" fill="#d2d2d2"/></svg>
<svg class="b" style="left:954px;top:234px" width="2" height="453"><rect x="0.70" y="0.50" width="1.00" height="452.50" fill="#d5d5d5"/></svg>
<svg class="b" style="left:954px;top:207px" width="2" height="28"><rect x="0.70" y="0.50" width="1.00" height="27.00" fill="#d2d2d2"/></svg>
<svg class="b" style="left:67px;top:209px" width="2" height="25"><rect x="0.20" y="0.00" width="1.20" height="25.00" fill="#cccccc"/></svg>
<svg class="b" style="left:67px;top:234px" width="2" height="453"><rect x="0.20" y="0.00" width="1.20" height="453.00" fill="#b8b8b8"/></svg>
<svg class="b" style="left:15px;top:234px" width="1024" height="2"><rect x="0.00" y="0.00" width="1024.00" height="1.30" fill="#b6b6b6"/></svg>
<svg class="b" style="left:166px;top:207px" width="144" height="27"><rect x="0.70" y="0.00" width="143.10" height="26.20" fill="#d9d7d5"/></svg>
<svg class="b" style="left:166px;top:233px" width="144" height="3"><rect x="0.70" y="0.00" width="143.10" height="2.20" fill="#107c41"/></svg>
<svg class="b" style="left:16px;top:379px" width="51" height="30"><rect x="0.00" y="0.84" width="50.20" height="28.84" fill="#d9d7d5"/></svg>
<svg class="b" style="left:16px;top:379px" width="51" height="2"><rect x="0.00" y="0.24" width="50.20" height="1.20" fill="#c4c2c0"/></svg>
<svg class="b" style="left:16px;top:408px" width="51" height="2"><rect x="0.00" y="0.08" width="50.20" height="1.20" fill="#b4b2b0"/></svg>
<svg class="b" style="left:66px;top:379px" width="3" height="31"><rect x="0.00" y="0.34" width="2.20" height="29.84" fill="#0e7539"/></svg>
<svg class="b" style="left:165px;top:377px;" width="147" height="34"><rect x="2.50" y="2.84" width="142.00" height="28.84" rx="0" fill="none" stroke="#107c41" stroke-width="2"/></svg>
<svg class="b" style="left:43px;top:209px;" width="23" height="23"><g transform="translate(0.50 0.80)"><path d="M20.4 0 V20.5 H0 Z" fill="#bcbcbc"/></g></svg>
<span class="t" style="left:111px;top:208px;font-size:19px;transform:translateX(0.96px) scaleX(0.9600);color:#3b3a39;">A</span>
<span class="t" style="left:232px;top:207px;font-size:20px;transform:translateX(0.39px) scaleX(0.9672);font-weight:700;color:#107c41;-webkit-text-stroke:0.5px #107c41;">B</span>
<span class="t" style="left:349px;top:208px;font-size:19px;transform:translateX(0.50px) scaleX(0.9600);color:#3b3a39;">C</span>
<span class="t" style="left:441px;top:208px;font-size:19px;transform:translateX(0.49px) scaleX(0.9600);color:#3b3a39;">D</span>
<span class="t" style="left:534px;top:208px;font-size:19px;transform:translateX(0.15px) scaleX(0.9600);color:#3b3a39;">E</span>
<span class="t" style="left:626px;top:208px;font-size:19px;transform:translateX(0.85px) scaleX(0.9600);color:#3b3a39;">F</span>
<span class="t" style="left:718px;top:208px;font-size:19px;transform:translateX(0.14px) scaleX(0.9600);color:#3b3a39;">G</span>
<span class="t" style="left:810px;top:208px;font-size:19px;transform:translateX(0.61px) scaleX(0.9600);color:#3b3a39;">H</span>
<span class="t" style="left:903px;top:210px;font-size:19px;transform:translateX(0.90px) scaleX(0.9153);color:#3b3a39;font-family:'Liberation Mono',monospace;">I</span>
<span class="t" style="left:997px;top:208px;font-size:19px;transform:translateX(0.79px) scaleX(0.9600);color:#3b3a39;">J</span>
<span class="t" style="left:34px;top:242px;font-size:19.5px;transform:translateX(0.85px) scaleX(0.9600);color:#3b3a39;-webkit-text-stroke:0.2px #3b3a39;">1</span>
<span class="t" style="left:35px;top:271px;font-size:19.5px;transform:translateX(0.11px) scaleX(0.9600);color:#3b3a39;-webkit-text-stroke:0.2px #3b3a39;">2</span>
<span class="t" style="left:35px;top:300px;font-size:19.5px;transform:translateX(0.15px) scaleX(0.9600);color:#3b3a39;-webkit-text-stroke:0.2px #3b3a39;">3</span>
<span class="t" style="left:35px;top:329px;font-size:19.5px;transform:translateX(0.15px) scaleX(0.9600);color:#3b3a39;-webkit-text-stroke:0.2px #3b3a39;">4</span>
<span class="t" style="left:35px;top:358px;font-size:19.5px;transform:translateX(0.11px) scaleX(0.9600);color:#3b3a39;-webkit-text-stroke:0.2px #3b3a39;">5</span>
<span class="t" style="left:33px;top:386px;font-size:20.5px;transform:translateX(0.82px) scaleX(1.1424);font-weight:700;color:#107c41;-webkit-text-stroke:0.5px #107c41;">6</span>
<span class="t" style="left:35px;top:415px;font-size:19.5px;transform:translateX(0.11px) scaleX(0.9600);color:#3b3a39;-webkit-text-stroke:0.2px #3b3a39;">7</span>
<span class="t" style="left:35px;top:444px;font-size:19.5px;transform:translateX(0.11px) scaleX(0.9600);color:#3b3a39;-webkit-text-stroke:0.2px #3b3a39;">8</span>
<span class="t" style="left:35px;top:473px;font-size:19.5px;transform:translateX(0.08px) scaleX(0.9600);color:#3b3a39;-webkit-text-stroke:0.2px #3b3a39;">9</span>
<span class="t" style="left:29px;top:502px;font-size:19.5px;transform:translateX(0.56px) scaleX(0.9600);color:#3b3a39;-webkit-text-stroke:0.2px #3b3a39;">10</span>
<span class="t" style="left:30px;top:531px;font-size:19.5px;transform:translateX(0.33px) scaleX(0.9600);color:#3b3a39;-webkit-text-stroke:0.2px #3b3a39;">11</span>
<span class="t" style="left:29px;top:560px;font-size:19.5px;transform:translateX(0.68px) scaleX(0.9600);color:#3b3a39;-webkit-text-stroke:0.2px #3b3a39;">12</span>
<span class="t" style="left:29px;top:588px;font-size:19.5px;transform:translateX(0.61px) scaleX(0.9600);color:#3b3a39;-webkit-text-stroke:0.2px #3b3a39;">13</span>
<span class="t" style="left:29px;top:617px;font-size:19.5px;transform:translateX(0.47px) scaleX(0.9600);color:#3b3a39;-webkit-text-stroke:0.2px #3b3a39;">14</span>
<span class="t" style="left:29px;top:646px;font-size:19.5px;transform:translateX(0.58px) scaleX(0.9600);color:#3b3a39;-webkit-text-stroke:0.2px #3b3a39;">15</span>
<span class="t" style="left:29px;top:675px;font-size:19.5px;transform:translateX(0.61px) scaleX(0.9600);color:#3b3a39;-webkit-text-stroke:0.2px #3b3a39;">16</span>
<span class="t" style="left:70px;top:242px;font-size:19.5px;transform:translateX(0.54px) scaleX(1.1082);font-weight:700;color:#000;">Fruit</span>
<span class="t" style="left:70px;top:271px;font-size:19.5px;transform:translateX(0.46px) scaleX(0.9544);color:#000;-webkit-text-stroke:0.25px #000;">Pear</span>
<span class="t" style="left:70px;top:300px;font-size:19.5px;transform:translateX(0.75px) scaleX(1.0226);color:#000;-webkit-text-stroke:0.25px #000;">Apple</span>
<span class="t" style="left:69px;top:329px;font-size:19.5px;transform:translateX(0.90px) scaleX(1.0251);color:#000;-webkit-text-stroke:0.25px #000;">Strawberry</span>
<div class="b" style="left:168.00px;top:235.00px;width:451.00px;height:390.00px;background:#fff;box-shadow:0 1px 11px 1px rgba(16,124,65,0.42);"></div>
<svg class="b" style="left:166px;top:233px;" width="455" height="394"><rect x="2.50" y="2.60" width="450.00" height="389.30" rx="0" fill="#fff" stroke="#0e7539" stroke-width="1.8"/></svg>
<span class="t" style="left:185px;top:251px;font-size:16px;transform:translateX(0.75px) scaleX(0.9444);">Find</span>
<svg class="b" style="left:584px;top:254px;" width="13" height="13"><g transform="translate(0.50 0.50)"><path d="M0.7 0.7 L10.3 10.3 M10.3 0.7 L0.7 10.3" fill="none" stroke="#484644" stroke-width="1.1"/></g></svg>
<span class="t" style="left:185px;top:281px;font-size:13px;transform:translateX(0.71px) scaleX(1.0135);-webkit-text-stroke:0.2px currentColor;">Find what:</span>
<svg class="b" style="left:184px;top:299px;" width="419" height="29"><rect x="2.50" y="2.40" width="414.20" height="25.00" rx="0" fill="#fff" stroke="#7a7876" stroke-width="1.2"/></svg>
<span class="t" style="left:190px;top:308px;font-size:14px;transform:translateX(0.26px) scaleX(1.0832);color:#000;-webkit-text-stroke:0.2px currentColor;">Apple</span>
<svg class="b" style="left:229px;top:306px" width="3" height="17"><rect x="0.90" y="0.20" width="2.00" height="16.40" fill="#000"/></svg>
<span class="t" style="left:186px;top:337px;font-size:13px;transform:translateX(0.54px) scaleX(0.9624);-webkit-text-stroke:0.2px currentColor;">Wildcards can expand search.</span>
<span class="t" style="left:356px;top:337px;font-size:13px;transform:translateX(0.35px) scaleX(0.9808);-webkit-text-stroke:0.2px currentColor;">For example,</span>
<span class="t" style="left:433px;top:337px;font-size:13px;transform:translateX(0.12px) scaleX(1.0487);-webkit-text-stroke:0.2px currentColor;">&quot;sm?th&quot; finds &quot;smith&quot;.</span>
<span class="t" style="left:187px;top:359px;font-size:13px;transform:translateX(0.17px) scaleX(0.9891);color:#0410e4;text-decoration:underline;">About using wildcards to search</span>
<svg class="b" style="left:186px;top:412px;" width="15" height="11"><g transform="translate(0.20 0.60)"><path d="M0.9 1.6 L6.4 6.9 L11.9 1.6" fill="none" stroke="#484644" stroke-width="1.8"/></g></svg>
<span class="t" style="left:212px;top:410px;font-size:15.6px;transform:translateX(0.31px) scaleX(0.9814);">Search Options</span>
<span class="t" style="left:186px;top:441px;font-size:13px;transform:translateX(0.43px) scaleX(1.0525);-webkit-text-stroke:0.2px currentColor;">Within:</span>
<span class="t" style="left:395px;top:441px;font-size:13px;transform:translateX(0.49px) scaleX(1.0332);-webkit-text-stroke:0.2px currentColor;">Direction:</span>
<div class="b" style="left:186.00px;top:456.00px;width:207.00px;height:24.00px;background:linear-gradient(#ffffff 15%,#e9e9e9);border:1px solid #d4d4d4;border-radius:6px;box-shadow:0 1px 1px rgba(0,0,0,0.13),inset 3px 0 3px -2px rgba(0,0,0,0.13),inset -3px 0 3px -2px rgba(0,0,0,0.13);"></div>
<div class="b" style="left:396.00px;top:456.00px;width:207.00px;height:24.00px;background:linear-gradient(#ffffff 15%,#e9e9e9);border:1px solid #d4d4d4;border-radius:6px;box-shadow:0 1px 1px rgba(0,0,0,0.13),inset 3px 0 3px -2px rgba(0,0,0,0.13),inset -3px 0 3px -2px rgba(0,0,0,0.13);"></div>
<span class="t" style="left:196px;top:461px;font-size:14px;transform:translateX(0.18px) scaleX(0.9794);color:#000;-webkit-text-stroke:0.3px #000;">Sheet</span>
<span class="t" style="left:406px;top:461px;font-size:14px;transform:translateX(0.07px) scaleX(1.0670);color:#000;-webkit-text-stroke:0.3px #000;">Down</span>
<svg class="b" style="left:376px;top:461px;" width="10" height="16"><g transform="translate(0.50 0.20)"><path d="M4 0 L8 5.5 H0 Z M4 13.5 L8 8 H0 Z" fill="#1a1a1a"/></g></svg>
<svg class="b" style="left:587px;top:461px;" width="10" height="16"><g transform="translate(0.50 0.20)"><path d="M4 0 L8 5.5 H0 Z M4 13.5 L8 8 H0 Z" fill="#1a1a1a"/></g></svg>
<svg class="b" style="left:188px;top:503px;" width="15" height="14"><rect x="2.10" y="1.70" width="10.60" height="10.80" rx="2.5" fill="#fff" stroke="#dcdcdc" stroke-width="1"/></svg>
<span class="t" style="left:201px;top:504px;font-size:13px;transform:translateX(0.75px) scaleX(0.9809);-webkit-text-stroke:0.2px currentColor;">Match case</span>
<svg class="b" style="left:188px;top:523px;" width="15" height="14"><rect x="2.10" y="1.70" width="10.60" height="10.80" rx="2.5" fill="#fff" stroke="#dcdcdc" stroke-width="1"/></svg>
<span class="t" style="left:201px;top:524px;font-size:13px;transform:translateX(0.71px) scaleX(1.0144);-webkit-text-stroke:0.2px currentColor;">Match entire cell contents</span>
<svg class="b" style="left:323px;top:579px;" width="87" height="29"><rect x="2.50" y="2.00" width="82.60" height="25.00" rx="0" fill="#fff" stroke="#726e6c" stroke-width="1.4"/></svg>
<span class="t" style="left:338px;top:588px;font-size:13px;transform:translateX(0.94px) scaleX(0.9840);-webkit-text-stroke:0.2px currentColor;">Find Next</span>
<svg class="b" style="left:420px;top:579px;" width="86" height="29"><rect x="1.65" y="1.95" width="82.60" height="25.10" rx="0" fill="#d3eddd" stroke="#86cfa3" stroke-width="1.3"/></svg>
<span class="t" style="left:440px;top:588px;font-size:13px;transform:translateX(0.60px) scaleX(1.0297);-webkit-text-stroke:0.2px currentColor;">Find All</span>
<svg class="b" style="left:516px;top:579px;" width="87" height="29"><rect x="1.90" y="2.00" width="82.50" height="25.00" rx="0" fill="#fff" stroke="#726e6c" stroke-width="1.4"/></svg>
<span class="t" style="left:530px;top:588px;font-size:13px;transform:translateX(0.66px) scaleX(0.9682);-webkit-text-stroke:0.2px currentColor;">Replace...</span>
</div></div>
</body>
</html>
